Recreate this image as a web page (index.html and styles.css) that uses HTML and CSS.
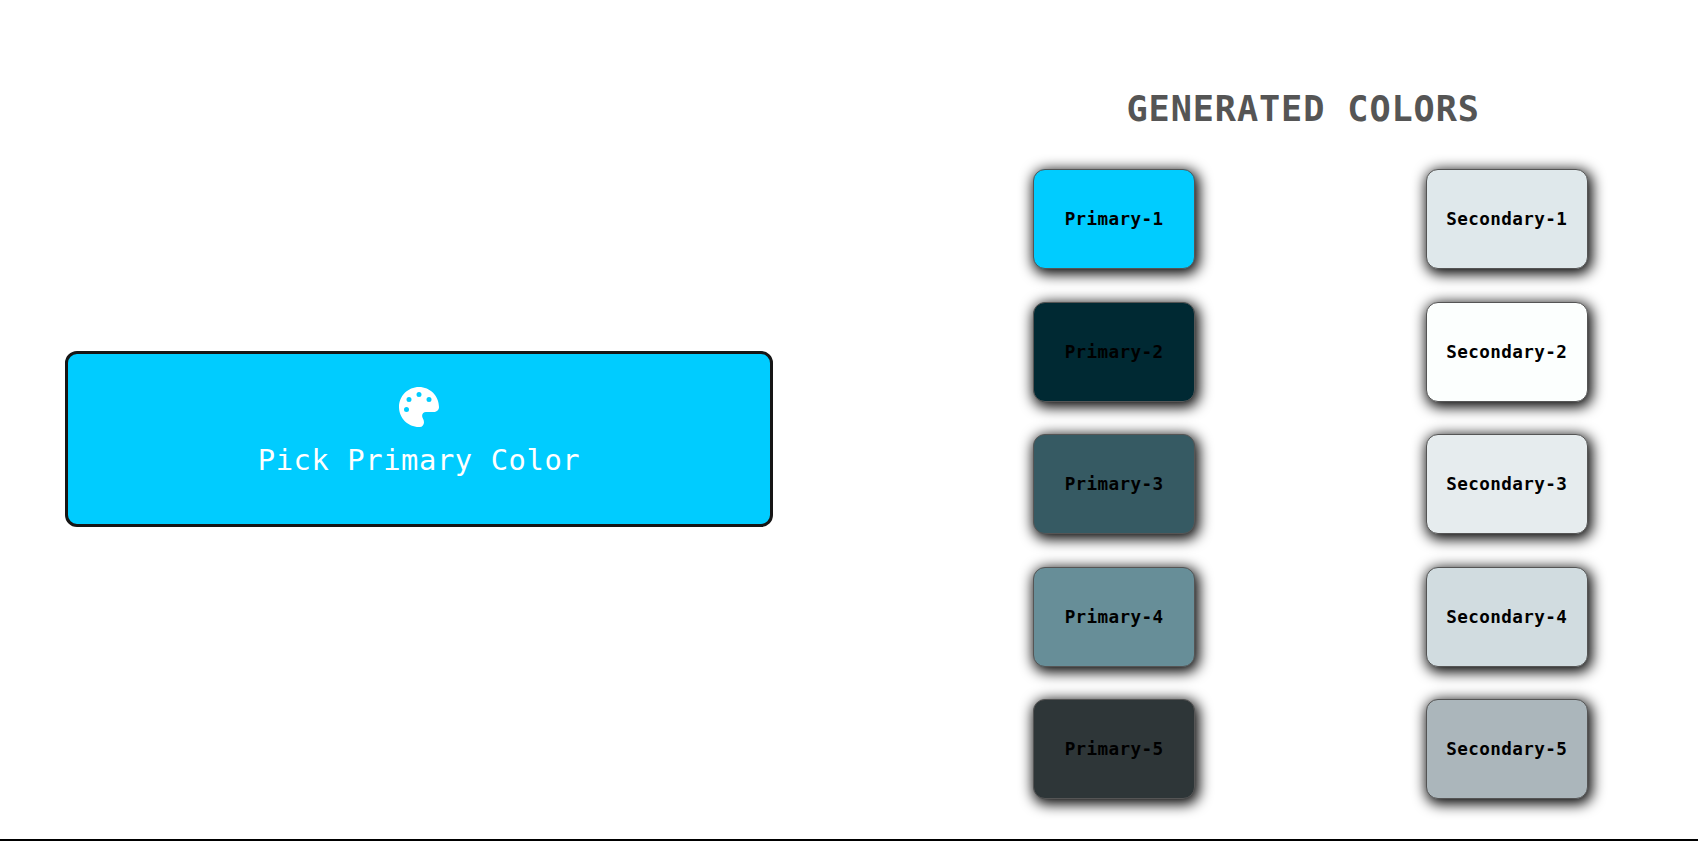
FILE: index.html
```html
<!DOCTYPE html>
<html lang="en">
<head>
<meta charset="utf-8">
<title>Generated Colors</title>
<link rel="stylesheet" href="styles.css">
</head>
<body>
<main class="page">
  <section class="picker">
    <button class="pick-button" type="button">
      <svg class="palette" viewBox="0 0 512 512" aria-hidden="true"><path fill="currentColor" d="M512 256c0 .9 0 1.800 0 2.700c-.4 36.500-33.600 61.300-70.100 61.300H344c-26.500 0-48 21.500-48 48c0 3.400 .4 6.700 1 9.900c2.100 10.200 6.500 20 10.800 29.900c6.100 13.800 12.100 27.500 12.100 42c0 31.800-21.600 60.700-53.400 62c-3.500 .1-7 .2-10.600 .2C114.600 512 0 397.400 0 256S114.600 0 256 0S512 114.600 512 256zM128 288a32 32 0 1 0-64 0 32 32 0 1 0 64 0zm0-96a32 32 0 1 0 0-64 32 32 0 1 0 0 64zM288 96a32 32 0 1 0-64 0 32 32 0 1 0 64 0zm96 96a32 32 0 1 0 0-64 32 32 0 1 0 0 64z"/></svg>
      <span class="pick-label">Pick Primary Color</span>
    </button>
  </section>
  <section class="generated">
    <h1 class="title">GENERATED COLORS</h1>
    <div class="columns">
      <div class="column">
        <div class="swatch p1">Primary-1</div>
        <div class="swatch p2">Primary-2</div>
        <div class="swatch p3">Primary-3</div>
        <div class="swatch p4">Primary-4</div>
        <div class="swatch p5">Primary-5</div>
      </div>
      <div class="column">
        <div class="swatch s1">Secondary-1</div>
        <div class="swatch s2">Secondary-2</div>
        <div class="swatch s3">Secondary-3</div>
        <div class="swatch s4">Secondary-4</div>
        <div class="swatch s5">Secondary-5</div>
      </div>
    </div>
  </section>
</main>
</body>
</html>
```
FILE: styles.css
```css
* { box-sizing: border-box; }
body { margin: 0; background: #fff; overflow: hidden; }
.page {
  display: flex;
  height: 841px;
  border-bottom: 2px solid #000;
}
.picker {
  flex: 0 0 838px;
  display: flex;
  align-items: center;
  padding: 39px 0 0 65px;
}
.pick-button {
  display: flex;
  flex-direction: column;
  align-items: center;
  width: 708px;
  height: 176px;
  padding: 33px 0 0;
  border: 3px solid #161616;
  border-radius: 12px;
  background: #00ccff;
  color: #fff;
}
.palette { width: 40px; height: 40px; }
.pick-label {
  margin-top: 13px;
  font: 28.800px/40px Consolas, "DejaVu Sans Mono", monospace;
  letter-spacing: 0.58px;
  white-space: pre;
}
.generated { flex: 1; padding-top: 85px; }
.title {
  width: 352px;
  margin: 0 0 36px 288.5px;
  font: bold 35.200px/48px Consolas, "DejaVu Sans Mono", monospace;
  letter-spacing: 0.9px;
  white-space: nowrap;
  color: #555;
}
.columns {
  display: flex;
  gap: 230.4px;
  padding-left: 195px;
}
.column { display: flex; flex-direction: column; gap: 32.6px; }
.swatch {
  display: flex;
  align-items: center;
  justify-content: center;
  width: 162.200px;
  height: 100px;
  border: 1px solid #555;
  border-radius: 12px;
  box-shadow: 2px 3px 14px 2px #000;
  font: bold 17.600px/24px Consolas, "DejaVu Sans Mono", monospace;
  letter-spacing: 0.4px;
  color: #000;
}
.p1 { background: #00ccff; }
.p2 { background: #002933; }
.p3 { background: #365a63; }
.p4 { background: #678e98; }
.p5 { background: #2e3638; }
.s1 { background: #dfe8eb; }
.s2 { background: #fcfffe; }
.s3 { background: #e6ecee; }
.s4 { background: #d1dce0; }
.s5 { background: #abb6bb; }
```
